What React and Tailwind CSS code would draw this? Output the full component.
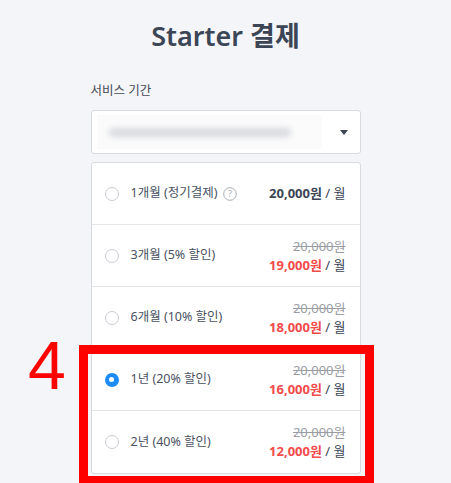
import { useState } from 'react'

const FONT = { fontFamily: '"Noto Sans", "Noto Sans CJK KR", sans-serif' }

const plans = [
  { id: '1m', label: '1개월 (정기결제)', price: '20,000원', help: true },
  { id: '3m', label: '3개월 (5% 할인)', original: '20,000원', price: '19,000원' },
  { id: '6m', label: '6개월 (10% 할인)', original: '20,000원', price: '18,000원' },
  { id: '1y', label: '1년 (20% 할인)', original: '20,000원', price: '16,000원' },
  { id: '2y', label: '2년 (40% 할인)', original: '20,000원', price: '12,000원' },
]

function Radio({ checked }) {
  if (checked) {
    return (
      <span className="grid size-[14px] shrink-0 place-items-center rounded-full bg-[#1d8cf8]">
        <span className="size-[5px] rounded-full bg-white" />
      </span>
    )
  }
  return <span className="size-[14px] shrink-0 rounded-full border border-[#c9ccd2] bg-white" />
}

function HelpIcon() {
  return (
    <svg width="14" height="14" viewBox="0 0 14 14" className="ml-[6px] shrink-0">
      <circle cx="7" cy="7" r="6.3" fill="none" stroke="#a9adb4" strokeWidth="1" />
      <text x="7" y="10.2" textAnchor="middle" fontSize="9" fill="#a9adb4" fontFamily="Noto Sans, sans-serif">?</text>
    </svg>
  )
}

function PlanRow({ plan, checked, onSelect }) {
  return (
    <button
      type="button"
      onClick={onSelect}
      className="flex h-[62px] w-full items-center border-b border-[#e3e5e9] pl-[13px] pr-[14px] text-left last:border-b-0"
    >
      <Radio checked={checked} />
      <span className="ml-[12px] flex items-center text-[12.5px] text-[#4a5262]">
        {plan.label}
        {plan.help && <HelpIcon />}
      </span>
      <span className="ml-auto flex flex-col items-end text-[13px] leading-[19px]">
        {plan.original ? (
          <>
            <span className="text-[#9a9da3] line-through">{plan.original}</span>
            <span>
              <span className="font-bold text-[#f24b4b]">{plan.price}</span>
              <span className="text-[#3b4556]"> / 월</span>
            </span>
          </>
        ) : (
          <span className="text-[#3b4556]">
            <span className="font-bold">{plan.price}</span> / 월
          </span>
        )}
      </span>
    </button>
  )
}

export default function App() {
  const [selected, setSelected] = useState('1y')

  return (
    <div className="relative h-[483px] overflow-hidden bg-[#f4f5f8]" style={FONT}>
      <div className="mx-auto w-[270px] pt-[16px]">
        <h1 className="text-center text-[27px] font-semibold leading-[40px] text-[#3b4556]">
          Starter 결제
        </h1>

        <p className="mt-[26px] text-[12.5px] leading-[18px] text-[#444b57]">서비스 기간</p>

        <div className="mt-[10px] flex h-[44px] items-center rounded-[3px] border border-[#d8dadf] bg-white pl-[5px] pr-[12px]">
          <div className="flex h-[34px] w-[225px] items-center bg-[#fbfbfc] pl-[12px]">
            <span className="h-[9px] w-[182px] rounded-full bg-[#d7d9de] blur-[3px]" />
          </div>
          <svg width="8" height="5" viewBox="0 0 8 5" className="ml-auto">
            <path d="M0 0h8L4 5z" fill="#3b4556" />
          </svg>
        </div>

        <div className="mt-[8px] rounded-[3px] border border-[#d8dadf] bg-white">
          {plans.map((plan) => (
            <PlanRow
              key={plan.id}
              plan={plan}
              checked={selected === plan.id}
              onSelect={() => setSelected(plan.id)}
            />
          ))}
        </div>
      </div>

      {/* annotation */}
      <span
        className="absolute left-[28px] top-[331px] text-[68px] leading-none text-[#ff0000]"
        style={{ fontFamily: '"Liberation Sans", sans-serif' }}
      >
        4
      </span>
      <div className="pointer-events-none absolute left-[79px] top-[345px] h-[140px] w-[295px] border-[9px] border-[#ff0000]" />
    </div>
  )
}
